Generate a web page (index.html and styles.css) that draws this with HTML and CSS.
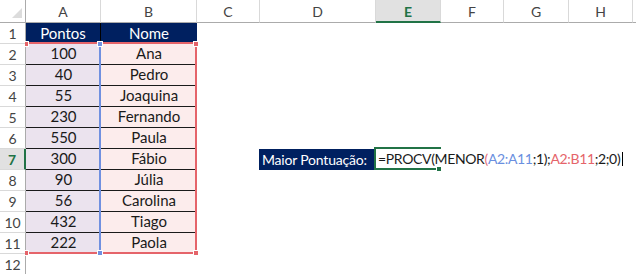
FILE: index.html
```html
<!DOCTYPE html>
<html lang="pt">
<head>
  <meta charset="UTF-8">
  <title>Planilha - PROCV</title>
  <link rel="stylesheet" href="styles.css">
</head>
<body>
  <div class="sheet">
    <div class="row head-row">
      <div class="corner"><span class="tri"></span></div>
      <div class="ch a">A</div>
      <div class="ch b">B</div>
      <div class="ch c">C</div>
      <div class="ch d">D</div>
      <div class="ch e current">E</div>
      <div class="ch f">F</div>
      <div class="ch g">G</div>
      <div class="ch h">H</div>
      <div class="ch rest"></div>
    </div>

    <div class="row">
      <div class="rh">1</div>
      <div class="cell a title sep">Pontos</div>
      <div class="cell b title">Nome</div>
    </div>
    <div class="row">
      <div class="rh">2</div>
      <div class="cell a pts">100</div>
      <div class="cell b name">Ana</div>
    </div>
    <div class="row">
      <div class="rh">3</div>
      <div class="cell a pts">40</div>
      <div class="cell b name">Pedro</div>
    </div>
    <div class="row">
      <div class="rh">4</div>
      <div class="cell a pts">55</div>
      <div class="cell b name">Joaquina</div>
    </div>
    <div class="row">
      <div class="rh">5</div>
      <div class="cell a pts">230</div>
      <div class="cell b name">Fernando</div>
    </div>
    <div class="row">
      <div class="rh">6</div>
      <div class="cell a pts">550</div>
      <div class="cell b name">Paula</div>
    </div>
    <div class="row">
      <div class="rh current">7</div>
      <div class="cell a pts">300</div>
      <div class="cell b name">Fábio</div>
      <div class="cell c"></div>
      <div class="cell d label">Maior Pontuação:</div>
    </div>
    <div class="row">
      <div class="rh">8</div>
      <div class="cell a pts">90</div>
      <div class="cell b name">Júlia</div>
    </div>
    <div class="row">
      <div class="rh">9</div>
      <div class="cell a pts">56</div>
      <div class="cell b name">Carolina</div>
    </div>
    <div class="row">
      <div class="rh">10</div>
      <div class="cell a pts">432</div>
      <div class="cell b name">Tiago</div>
    </div>
    <div class="row">
      <div class="rh">11</div>
      <div class="cell a pts">222</div>
      <div class="cell b name">Paola</div>
    </div>
    <div class="row">
      <div class="rh">12</div>
    </div>

    <!-- formula range highlights -->
    <div class="range-red"></div>
    <div class="range-blue"></div>
    <span class="handle red cut top-l"></span>
    <span class="handle red top-r"></span>
    <span class="handle red bot-r"></span>
    <span class="handle red cut bot-l"></span>
    <span class="handle blue top-m"></span>
    <span class="handle blue bot-m"></span>

    <!-- active cell E7 in edit mode -->
    <div class="active-cell"></div>
    <div class="editor">=PROCV(MENOR<span class="paren">(</span><span class="ref-blue">A2:A11</span>;1);<span class="ref-red">A2:B11</span>;2;0)<span class="caret"></span></div>
    <span class="handle green fill"></span>
  </div>
</body>
</html>
```

FILE: styles.css
```css
* {
  box-sizing: border-box;
}
body {
  margin: 0;
  background: #fff;
  font-family: Lato, "Liberation Sans", sans-serif;
}
.sheet {
  position: relative;
  width: 636px;
  height: 274px;
  overflow: hidden;
}
.row {
  display: flex;
  height: 21px;
}
.head-row {
  height: 23px;
}

/* column headers */
.corner {
  position: relative;
  width: 26px;
  border-right: 1px solid #ababab;
  border-bottom: 1px solid #ababab;
}
.tri {
  position: absolute;
  right: 3px;
  bottom: 4px;
  width: 0;
  height: 0;
  border-left: 10px solid transparent;
  border-bottom: 10px solid #dcdcdc;
}
.ch {
  display: flex;
  align-items: center;
  justify-content: center;
  border-right: 1px solid #d9d9d9;
  border-bottom: 1px solid #ababab;
  color: #444;
  font-size: 14px;
  padding-top: 1px;
}
.ch.current {
  background: #e1e1e1;
  color: #217346;
  font-weight: bold;
  border-bottom: 2px solid #217346;
}
.ch.rest {
  flex: 1;
  border-right: none;
}
.a { width: 75px; }
.b { width: 96px; }
.c { width: 63px; }
.d { width: 116px; }
.e { width: 65px; }
.f { width: 63px; }
.g { width: 65px; }
.h { width: 64px; }

/* row headers */
.rh {
  width: 26px;
  display: flex;
  align-items: center;
  justify-content: center;
  border-right: 1px solid #ababab;
  border-bottom: 1px solid #d9d9d9;
  color: #444;
  font-size: 14px;
}
.rh.current {
  background: #e1e1e1;
  color: #217346;
  font-weight: bold;
  border-right: 2px solid #217346;
}

/* cells */
.cell {
  display: flex;
  align-items: flex-end;
  justify-content: center;
  padding-bottom: 2px;
  font-size: 15px;
  line-height: 17px;
  color: #1a1a1a;
  white-space: nowrap;
}
.title {
  background: #002060;
  color: #fff;
}
.title.sep {
  border-right: 1px solid #000;
}
.pts {
  background: #ebe3ee;
  border-bottom: 1px solid #1a1a1a;
}
.name {
  background: #fcecec;
  border-bottom: 1px solid #1a1a1a;
}
.label {
  margin-left: -1px;
  background: #002060;
  color: #fff;
  justify-content: flex-start;
  padding-left: 3px;
  font-size: 14px;
  letter-spacing: -0.2px;
}

/* range highlights */
.range-red {
  position: absolute;
  left: 26px;
  top: 42px;
  width: 171px;
  height: 212px;
  border: 2px solid #e5646a;
  border-left: none;
}
.range-blue {
  position: absolute;
  left: 99px;
  top: 44px;
  width: 2px;
  height: 208px;
  background: #7090e0;
}
.handle {
  position: absolute;
  width: 6px;
  height: 6px;
  border: 1px solid #fff;
}
.handle.red { background: #e5646a; }
.handle.blue { background: #7090e0; }
.handle.green { background: #217346; }
.handle.cut {
  width: 4px;
  border-left: none;
  left: 25px;
}
.top-l { top: 41px; }
.bot-l { top: 250px; }
.top-r { left: 193px; top: 41px; }
.bot-r { left: 193px; top: 250px; }
.top-m { left: 97px; top: 41px; }
.bot-m { left: 97px; top: 250px; }

/* active cell + editor */
.active-cell {
  position: absolute;
  left: 374px;
  top: 147px;
  width: 67px;
  height: 23px;
  border: 2px solid #217346;
}
.editor {
  position: absolute;
  left: 376px;
  top: 149px;
  height: 18px;
  display: flex;
  align-items: flex-end;
  padding: 0 3px 0 2px;
  background: #fff;
  font-size: 14px;
  letter-spacing: -0.35px;
  line-height: 17px;
  color: #1a1a1a;
  white-space: nowrap;
}
.paren { color: #e5707a; }
.ref-blue { color: #6a8fe0; }
.ref-red { color: #e5646a; }
.caret {
  display: inline-block;
  width: 1px;
  height: 14px;
  margin-left: 2px;
  margin-bottom: 1px;
  background: #000;
}
.fill {
  left: 436px;
  top: 166px;
}
```
